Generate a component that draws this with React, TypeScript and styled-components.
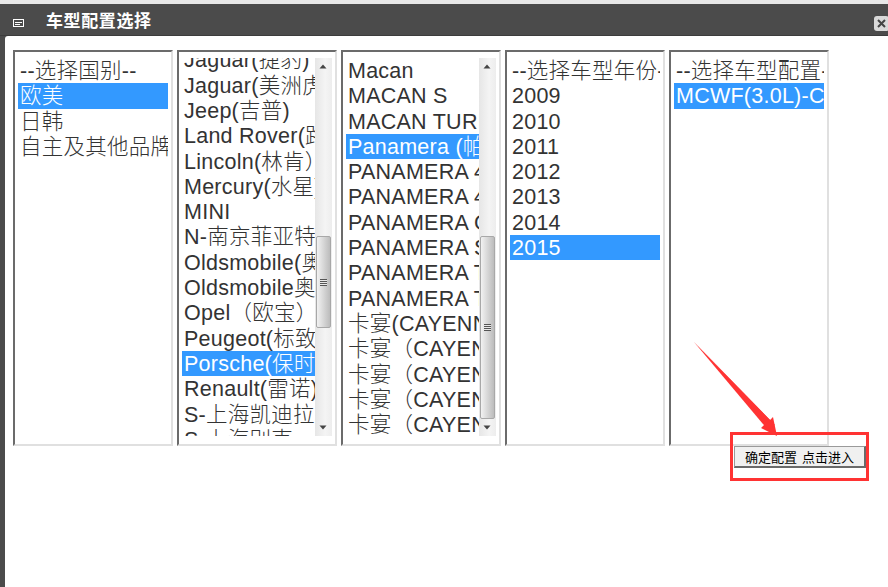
import React from "react";
import styled, { createGlobalStyle } from "styled-components";

const GlobalStyle = createGlobalStyle`
  html, body {
    margin: 0;
    padding: 0;
    background: #fff;
    overflow: hidden;
  }
`;

const Page = styled.div`
  position: relative;
  width: 888px;
  height: 587px;
  display: flex;
  flex-direction: column;
  background: #e8e8e8;
  padding-top: 4px;
  box-sizing: border-box;
  overflow: hidden;
  font-family: "Liberation Sans", "Noto Sans CJK SC", sans-serif;
`;

const TitleBar = styled.div`
  height: 32px;
  flex: none;
  display: flex;
  align-items: center;
  background: #4b4b4b;
  border-bottom: 1px solid #3c3c3c;
  box-sizing: border-box;
`;

const TitleIcon = styled.svg`
  width: 11px;
  height: 8px;
  margin: 7px 0 0 13px;
  flex: none;
`;

const TitleText = styled.div`
  margin-left: 22px;
  flex: 1;
  color: #fff;
  font-size: 17px;
  font-weight: 700;
  letter-spacing: 0.6px;
  font-family: "Noto Sans CJK SC", sans-serif;
`;

const CloseButton = styled.div`
  width: 15px;
  height: 15px;
  margin: 7px -1px 0 0;
  flex: none;
  display: flex;
  align-items: center;
  justify-content: center;
  background: #d9d9d9;
  border-radius: 3px;
`;

const WindowFrame = styled.div`
  flex: 1;
  display: flex;
  background: #4b4b4b;
  padding-left: 5px;
`;

const WindowBody = styled.div`
  flex: 1;
  background: #fff;
  border-top-left-radius: 3px;
  padding: 14px 22px 0 8px;
`;

const ListRow = styled.div`
  display: flex;
  gap: 4px;
`;

const ListBox = styled.div`
  width: 160px;
  height: 396px;
  box-sizing: border-box;
  display: flex;
  padding: 6px 3px 8px;
  border-style: solid;
  border-width: 2px;
  border-color: #6b6b6b #e0e0e0 #e0e0e0 #6b6b6b;
  background: #fff;
`;

const ItemClip = styled.div`
  flex: 1;
  min-width: 0;
  overflow: hidden;
`;

const ItemList = styled.div<{ $offset?: number }>`
  margin-top: ${({ $offset }) => $offset ?? 0}px;
`;

const Item = styled.div<{ $selected?: boolean }>`
  height: 25.3px;
  line-height: 27px;
  padding-left: 2px;
  font-size: 21.5px;
  font-weight: 300;
  letter-spacing: 0.25px;
  white-space: nowrap;
  overflow: hidden;
  color: ${({ $selected }) => ($selected ? "#fff" : "#333")};
  background: ${({ $selected }) => ($selected ? "#3399ff" : "transparent")};
`;

const ScrollBar = styled.div`
  width: 17px;
  flex: none;
  display: flex;
  flex-direction: column;
  background: linear-gradient(90deg, #e6e6e6, #f4f4f4 60%, #ededed);
`;

const ScrollArrow = styled.div`
  height: 17px;
  flex: none;
  display: flex;
  align-items: center;
  justify-content: center;
  padding-right: 1px;
  box-sizing: border-box;
`;

const ScrollTrack = styled.div`
  flex: 1;
  min-height: 0;
`;

const ScrollThumb = styled.div<{ $top: number; $height: number }>`
  margin-top: ${({ $top }) => $top}px;
  height: ${({ $height }) => $height}px;
  width: 15px;
  margin-left: 1px;
  box-sizing: border-box;
  display: flex;
  align-items: center;
  justify-content: center;
  border: 1px solid #a8a8a8;
  border-radius: 2px;
  background: linear-gradient(90deg, #f2f2f2, #d4d4d4 55%, #bcbcbc);
`;

const Grip = styled.div`
  width: 7px;
  height: 7px;
  background: repeating-linear-gradient(180deg, #555 0 1px, #e8e8e8 1px 2px);
`;

const ButtonRow = styled.div`
  display: flex;
  justify-content: flex-end;
`;

const EnterButton = styled.button`
  width: 132px;
  height: 22px;
  padding: 0;
  box-sizing: border-box;
  border-style: solid;
  border-width: 1px 2px 2px 1px;
  border-color: #9a9a9a #6a6a6a #6a6a6a #9a9a9a;
  background: #f0f0f0;
  color: #000;
  font-size: 13px;
  word-spacing: 2px;
  font-family: "Noto Sans CJK SC", sans-serif;
`;

const HighlightBox = styled.div`
  position: absolute;
  left: 730px;
  top: 432px;
  width: 139px;
  height: 49px;
  box-sizing: border-box;
  border: 3px solid #ff3333;
`;

const ArrowMark = styled.svg`
  position: absolute;
  left: 690px;
  top: 338px;
  width: 92px;
  height: 102px;
`;

const countries = ["--选择国别--", "欧美", "日韩", "自主及其他品牌"];
const makes = [
  "Jaguar(捷豹)",
  "Jaguar(美洲虎)",
  "Jeep(吉普)",
  "Land Rover(路虎)",
  "Lincoln(林肯）",
  "Mercury(水星)",
  "MINI",
  "N-南京菲亚特",
  "Oldsmobile(奥兹莫比尔)",
  "Oldsmobile奥兹莫比尔",
  "Opel（欧宝）",
  "Peugeot(标致)",
  "Porsche(保时捷)",
  "Renault(雷诺)",
  "S-上海凯迪拉克",
  "S-上海别克",
];
const models = [
  "Macan",
  "MACAN S",
  "MACAN TURBO",
  "Panamera (帕拉梅拉)",
  "PANAMERA 4",
  "PANAMERA 4S",
  "PANAMERA GTS",
  "PANAMERA S",
  "PANAMERA Turbo",
  "PANAMERA Turbo S",
  "卡宴(CAYENNE)",
  "卡宴（CAYENNE）",
  "卡宴（CAYENNE S）",
  "卡宴（CAYENNE GTS）",
  "卡宴（CAYENNE Turbo）",
];
const years = ["--选择车型年份--", "2009", "2010", "2011", "2012", "2013", "2014", "2015"];
const trims = ["--选择车型配置--", "MCWF(3.0L)-CAYENNE"];

interface SelectListProps {
  items: string[];
  selected: string;
  offset?: number;
  thumb?: { top: number; height: number };
}

const SelectList: React.FC<SelectListProps> = ({ items, selected, offset, thumb }) => (
  <ListBox>
    <ItemClip>
      <ItemList $offset={offset}>
        {items.map((item) => (
          <Item key={item} $selected={item === selected}>
            {item}
          </Item>
        ))}
      </ItemList>
    </ItemClip>
    {thumb && (
      <ScrollBar>
        <ScrollArrow>
          <svg width="8" height="5" viewBox="0 0 8 5">
            <path d="M4 0.5 L7.5 4.5 H0.5 Z" fill="#444" />
          </svg>
        </ScrollArrow>
        <ScrollTrack>
          <ScrollThumb $top={thumb.top} $height={thumb.height}>
            <Grip />
          </ScrollThumb>
        </ScrollTrack>
        <ScrollArrow>
          <svg width="8" height="5" viewBox="0 0 8 5">
            <path d="M0.5 0.5 H7.5 L4 4.5 Z" fill="#444" />
          </svg>
        </ScrollArrow>
      </ScrollBar>
    )}
  </ListBox>
);

const App: React.FC = () => {
  return (
    <Page>
      <GlobalStyle />
      <TitleBar>
        <TitleIcon viewBox="0 0 11 8">
          <rect x="0.5" y="0.5" width="10" height="7" fill="none" stroke="#fff" />
          <path d="M2 3.5 H9 M2 5.5 H7" stroke="#fff" />
        </TitleIcon>
        <TitleText>车型配置选择</TitleText>
        <CloseButton>
          <svg width="9" height="9" viewBox="0 0 9 9">
            <path d="M1 1 L8 8 M8 1 L1 8" stroke="#444" strokeWidth="2" />
          </svg>
        </CloseButton>
      </TitleBar>
      <WindowFrame>
        <WindowBody>
          <ListRow>
            <SelectList items={countries} selected="欧美" />
            <SelectList
              items={makes}
              selected="Porsche(保时捷)"
              offset={-10.6}
              thumb={{ top: 161, height: 92 }}
            />
            <SelectList
              items={models}
              selected="Panamera (帕拉梅拉)"
              thumb={{ top: 161, height: 183 }}
            />
            <SelectList items={years} selected="2015" />
            <SelectList items={trims} selected="MCWF(3.0L)-CAYENNE" />
          </ListRow>
          <ButtonRow>
            <EnterButton>确定配置 点击进入</EnterButton>
          </ButtonRow>
        </WindowBody>
      </WindowFrame>
      <HighlightBox />
      <ArrowMark viewBox="690 338 92 102">
        <path d="M694 342 L769 420 L761 428 L777 436 L773 417 L770 420 Z" fill="#ff3333" />
        <path d="M694 342 L775 425 L768 430 Z" fill="#ff3333" />
      </ArrowMark>
    </Page>
  );
};

export default App;
